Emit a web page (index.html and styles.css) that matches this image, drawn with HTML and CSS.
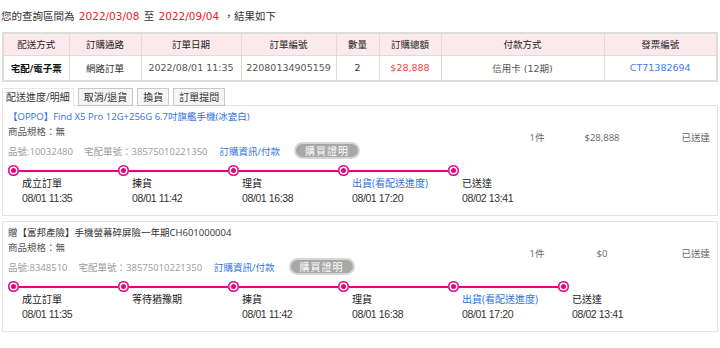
FILE: index.html
```html
<!DOCTYPE html>
<html lang="zh-Hant">
<head>
    <meta charset="UTF-8">
    <title>訂單查詢</title>
    <link rel="stylesheet" href="styles.css">
</head>
<body>
<div class="page">

    <p class="range">您的查詢區間為 <em>2022/03/08</em> 至 <em>2022/09/04</em> ，結果如下</p>

    <table class="summary">
        <tr>
            <th>配送方式</th>
            <th>訂購通路</th>
            <th>訂單日期</th>
            <th>訂單編號</th>
            <th>數量</th>
            <th>訂購總額</th>
            <th>付款方式</th>
            <th>發票編號</th>
        </tr>
        <tr>
            <td class="ship">宅配/電子票</td>
            <td class="dark">網路訂單</td>
            <td>2022/08/01 11:35</td>
            <td>22080134905159</td>
            <td class="dark">2</td>
            <td class="total">$28,888</td>
            <td>信用卡 (12期)</td>
            <td><a class="invoice" href="#">CT71382694</a></td>
        </tr>
    </table>

    <div class="tabs">
        <span class="tab active">配送進度/明細</span>
        <span class="tab">取消/退貨</span>
        <span class="tab">換貨</span>
        <span class="tab">訂單提問</span>
    </div>

    <!-- 商品 1 -->
    <div class="item">
        <div class="info-row">
            <div class="info">
                <a class="name" href="#">【OPPO】Find X5 Pro 12G+256G 6.7吋旗艦手機(冰瓷白)</a>
                <div class="spec">商品規格：無</div>
                <div class="meta">
                    <span>品號:10032480</span>
                    <span>宅配單號：38575010221350</span>
                    <a href="#">訂購資訊/付款</a>
                    <button class="proof">購買證明</button>
                </div>
            </div>
            <div class="qty">1件</div>
            <div class="price">$28,888</div>
            <div class="status">已送達</div>
        </div>
        <div class="timeline">
            <div class="step"><span class="dot"></span><div class="label">成立訂單</div><div class="time">08/01 11:35</div></div>
            <div class="step"><span class="dot"></span><div class="label">揀貨</div><div class="time">08/01 11:42</div></div>
            <div class="step"><span class="dot"></span><div class="label">理貨</div><div class="time">08/01 16:38</div></div>
            <div class="step"><span class="dot"></span><div class="label link">出貨(看配送進度)</div><div class="time">08/01 17:20</div></div>
            <div class="step"><span class="dot"></span><div class="label">已送達</div><div class="time">08/02 13:41</div></div>
        </div>
    </div>

    <!-- 商品 2 (贈品) -->
    <div class="item">
        <div class="info-row">
            <div class="info">
                <div class="name gift">贈【富邦產險】手機螢幕碎屏險一年期CH601000004</div>
                <div class="spec">商品規格：無</div>
                <div class="meta">
                    <span>品號:8348510</span>
                    <span>宅配單號：38575010221350</span>
                    <a href="#">訂購資訊/付款</a>
                    <button class="proof">購買證明</button>
                </div>
            </div>
            <div class="qty">1件</div>
            <div class="price">$0</div>
            <div class="status">已送達</div>
        </div>
        <div class="timeline">
            <div class="step"><span class="dot"></span><div class="label">成立訂單</div><div class="time">08/01 11:35</div></div>
            <div class="step"><span class="dot"></span><div class="label">等待猶豫期</div></div>
            <div class="step"><span class="dot"></span><div class="label">揀貨</div><div class="time">08/01 11:42</div></div>
            <div class="step"><span class="dot"></span><div class="label">理貨</div><div class="time">08/01 16:38</div></div>
            <div class="step"><span class="dot"></span><div class="label link">出貨(看配送進度)</div><div class="time">08/01 17:20</div></div>
            <div class="step"><span class="dot"></span><div class="label">已送達</div><div class="time">08/02 13:41</div></div>
        </div>
    </div>

</div>
</body>
</html>
```

FILE: styles.css
```css
* {
    box-sizing: border-box;
}
body {
    margin: 0;
    background: #fff;
    color: #333;
    font-family: "Open Sans", "Noto Sans CJK TC", sans-serif;
    font-size: 10px;
}
a {
    text-decoration: none;
}
.page {
    padding: 0 2px;
}

/* 查詢區間 */
.range {
    margin: 0 0 0 -1px;
    padding-top: 9px;
    font-family: "DejaVu Sans", "Noto Sans CJK TC", sans-serif;
    font-size: 10.5px;
    line-height: 15px;
    word-spacing: 1px;
    color: #333;
}
.range em {
    font-style: normal;
    color: #e8202a;
}

/* 訂單摘要 */
.summary {
    width: 716px;
    margin-top: 8px;
    border-collapse: collapse;
    border: 2px solid #dcdcdc;
    table-layout: fixed;
    font-family: "DejaVu Sans", "Noto Sans CJK TC", sans-serif;
    font-size: 9.5px;
}
.summary th {
    height: 22px;
    background: #fce9eb;
    border: 1px solid #dcdcdc;
    font-weight: normal;
    color: #222;
}
.summary td {
    height: 26px;
    border: 1px solid #dcdcdc;
    text-align: center;
    color: #555;
}
.summary th:nth-child(1) { width: 66px; }
.summary th:nth-child(2) { width: 72px; }
.summary th:nth-child(3) { width: 100px; }
.summary th:nth-child(4) { width: 95px; }
.summary th:nth-child(5) { width: 43px; }
.summary th:nth-child(6) { width: 62px; }
.summary th:nth-child(7) { width: 163px; }
.summary td.ship {
    font-weight: bold;
    color: #111;
}
.summary td.dark {
    color: #333;
}
.summary td.total {
    color: #e84545;
}
.invoice {
    color: #3c7de6;
}

/* 頁籤 */
.tabs {
    display: flex;
    gap: 4px;
    margin-top: 6px;
    margin-bottom: -1px;
    position: relative;
    z-index: 2;
}
.tab {
    height: 18px;
    line-height: 16px;
    padding: 0 5px;
    border: 1px solid #c8c8c8;
    background: #f6f6f6;
    color: #333;
}
.tab.active {
    padding: 0 3px;
    background: #fff;
    border-color: #e6e6e6;
    border-bottom-color: #fff;
}

/* 商品 */
.item {
    border: 1px solid #e3e3e3;
    padding: 3px 0 9px 5px;
    font-size: 9.5px;
}
.item + .item {
    margin-top: 5px;
}
.info-row {
    display: grid;
    grid-template-columns: 1fr 64px 66px 82px;
    align-items: center;
}
.name {
    display: block;
    line-height: 15px;
    color: #2f72de;
}
.name.gift {
    color: #333;
}
.spec {
    line-height: 15px;
    color: #555;
}
.meta {
    display: flex;
    align-items: center;
    height: 17px;
    margin-top: 3px;
    color: #9a9a9a;
}
.meta span + span {
    margin-left: 11px;
}
.meta a {
    margin-left: 12px;
    color: #2f72de;
}
.proof {
    margin-left: 14px;
    height: 17px;
    padding: 0 9px;
    border: 2px solid #d6d6d6;
    border-radius: 9px;
    background: #a8a8a8;
    color: #fff;
    font-family: "Noto Sans CJK TC", sans-serif;
    font-size: 10px;
    line-height: 13px;
    letter-spacing: 1px;
}
.qty,
.price,
.status {
    margin-top: 6px;
    color: #666;
}
.qty,
.price {
    text-align: center;
}
.status {
    text-align: right;
    padding-right: 7px;
}

/* 配送進度 */
.timeline {
    display: flex;
    margin-top: 6px;
    font-size: 10px;
}
.step {
    position: relative;
    width: 110px;
}
.step::after {
    content: "";
    position: absolute;
    left: 6px;
    top: 4.5px;
    width: 110px;
    height: 2px;
    background: #e4007f;
}
.step:last-child::after {
    display: none;
}
.dot {
    position: relative;
    z-index: 1;
    display: block;
    width: 11px;
    height: 11px;
    border-radius: 50%;
    background: #e4007f;
    box-shadow: inset 0 0 0 1.5px #e4007f, inset 0 0 0 3px #fff;
}
.label {
    padding-left: 14px;
    line-height: 14px;
    color: #222;
    white-space: nowrap;
}
.label.link {
    color: #2f72de;
}
.time {
    padding-left: 14px;
    line-height: 16px;
    font-family: "Liberation Sans", sans-serif;
    font-size: 10.5px;
    letter-spacing: -0.4px;
    color: #333;
}
```
